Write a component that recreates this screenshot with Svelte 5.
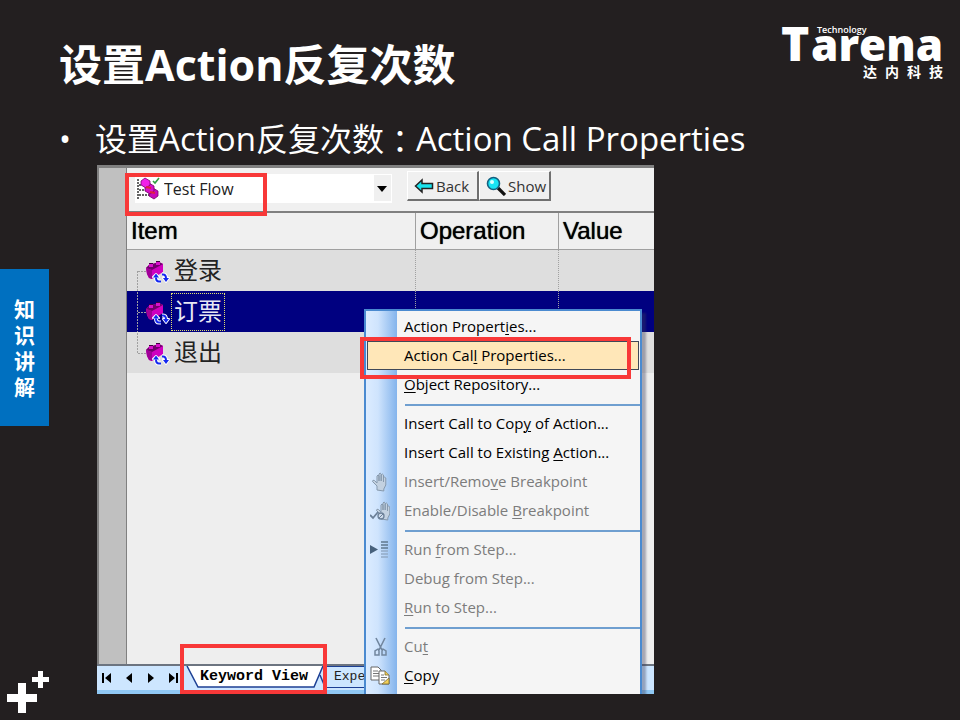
<script>
  const flows = ['Test Flow'];
  const rows = ['登录', '订票', '退出'];
  let selected = $state(1);

  // Each label is split around its underlined access key.
  const groups = [
    [
      { parts: ['Action Propert', 'i', 'es...'] },
      { parts: ['Action Cal', 'l', ' Properties...'], active: true },
      { parts: ['', 'O', 'bject Repository...'] }
    ],
    [
      { parts: ['Insert Call to Cop', 'y', ' of Action...'] },
      { parts: ['Insert Call to Existing ', 'A', 'ction...'] },
      { parts: ['Insert/Remo', 'v', 'e Breakpoint'], off: true, icon: 'hand' },
      { parts: ['Enable/Disable ', 'B', 'reakpoint'], off: true, icon: 'handcheck' }
    ],
    [
      { parts: ['Run ', 'f', 'rom Step...'], off: true, icon: 'run' },
      { parts: ['Debu', 'g', ' from Step...'], off: true },
      { parts: ['', 'R', 'un to Step...'], off: true }
    ],
    [
      { parts: ['Cu', 't', ''], off: true, icon: 'cut' },
      { parts: ['', 'C', 'opy'], icon: 'copy' }
    ]
  ];
</script>

{#snippet hand()}
  <path d="M7 18v-4L2.500 9.500q0-2 2-1L7 11V4q1-2 2 0v5-7q1-2 2.200 0v7-6q1.200-2 2.300 0v7-4q1.200-2 2.300 0v7l-2 4v2z" fill="#c3d1e0" stroke="#8699ad" stroke-width="1" />
{/snippet}

<div class="slide">
  <aside>
    <div class="chapter">
      <span>知</span><span>识</span><span>讲</span><span>解</span>
    </div>
    <svg class="plus" width="49" height="44" viewBox="0 0 49 44" aria-hidden="true">
      <path d="M18 13h8v11h11v8H26v11h-8V32H7v-8h11zM38 1h5v6h6v5h-6v6h-5v-6h-6V7h6z" fill="#fff" />
    </svg>
  </aside>

  <main>
    <header>
      <h1>设置Action反复次数</h1>
      <svg class="logo" width="170" height="62" viewBox="0 0 170 62" role="img" aria-label="Tarena Technology 达内科技">
        <text x="1" y="41" class="brand" font-size="48">T</text>
        <text x="31" y="41" class="brand" font-size="44">arena</text>
        <text x="37" y="13" class="sub">Technology</text>
        <text x="83 105 127 149" y="57" class="cn">达内科技</text>
      </svg>
    </header>

    <ul class="points">
      <li>设置<span class="latin">Action</span>反复次数<span class="colon">：</span><span class="latin">Action Call Properties</span></li>
    </ul>

    <section class="shot">
      <div class="work">
        <div class="gutter"></div>
        <div class="panel">
          <div class="toolbar">
            <div class="combo">
              <svg class="flowicon" width="24" height="24" viewBox="0 0 24 24" aria-hidden="true">
                <path d="M2 2v20M3 8h6M3 13h9M3 18h12" stroke="#333" stroke-width="1.500" stroke-dasharray="2 1" fill="none" />
                <g stroke="#7a0070" stroke-width=".8">
                  <path d="M13 14l4-3 5 3v5l-4 3-5-3z" fill="#c808b8" />
                  <path d="M9 9l4-3 5 3v5l-4 3-5-3z" fill="#d810c8" />
                  <path d="M5 4l4-3 5 3v4l-4 3-5-3z" fill="#f020e8" />
                </g>
                <path d="M10 10l5 1M14 15l5 1" stroke="#e02040" stroke-width="2" />
                <path d="M17 4l2 2 4-5" fill="none" stroke="#30a040" stroke-width="1.600" />
              </svg>
              <select aria-label="Test flow">
                {#each flows as f}<option>{f}</option>{/each}
              </select>
              <span class="arrow"></span>
            </div>
            <div class="tools">
              <button class="tool">
                <svg width="20" height="16" viewBox="0 0 20 16" aria-hidden="true">
                  <path d="M1.500 8L8 2v3.500h10.500v5H8V14z" fill="#18e4ee" stroke="#222" stroke-width="1.500" />
                </svg>Back
              </button>
              <button class="tool">
                <svg width="20" height="20" viewBox="0 0 20 20" aria-hidden="true">
                  <path d="M12 12l7 7" stroke="#111" stroke-width="3.200" />
                  <circle cx="7.500" cy="7.500" r="6" fill="#18e4f4" stroke="#146080" stroke-width="1.600" />
                  <circle cx="6" cy="6" r="2" fill="#d8ffff" />
                </svg>Show
              </button>
            </div>
          </div>

          <table>
            <colgroup><col class="c1" /><col class="c2" /><col /></colgroup>
            <thead>
              <tr><th>Item</th><th>Operation</th><th>Value</th></tr>
            </thead>
            <tbody>
              {#each rows as name, i}
                <tr class:sel={selected === i} onclick={() => (selected = i)}>
                  <td>
                    <div class="node">
                      <svg width="44" height="40" viewBox="0 0 44 40" aria-hidden="true">
                        <path d={i === 0 ? 'M10.500 20v20' : i === 2 ? 'M10.500 0v20' : 'M10.500 0v40'} class="tree" />
                        <path d="M11 20.500h8" class="tree" />
                        <path d="M19 17l3-3 10-3 4 2v8l-11 7-3-1-2-4z" fill="#d000c0" />
                        <path d="M19 17l3-3 10-3 4 2-11 6z" fill="#70006c" />
                        <path d="M19 17l6 2v9l-3-1-2-4z" fill="#a00098" />
                        <path d="M22 12h4v4h-4zM29 10h4v4h-4z" fill="#d810cc" />
                        <path d="M22 12h4v1h-4zM29 10h4v1h-4z" fill="#400040" />
                        <g fill="none" stroke="#fff" stroke-width="4" stroke-linejoin="round">
                          <path d="M34 30.500h-2q-3 0-3-4M35 23.500h1q3 0 3 4" />
                          <path d="M26 26l3-3 3 3zM36 27l3 4 3-4z" stroke-width="2" />
                        </g>
                        <path d="M34 30.500h-2q-3 0-3-4M35 23.500h1q3 0 3 4" fill="none" stroke="#1428f0" stroke-width="2" />
                        <path d="M26 26.500l3-4 3 4zM36 27l3 4 3-4z" fill="#1428f0" />
                      </svg>
                      <span>{name}</span>
                    </div>
                  </td>
                  <td></td>
                  <td></td>
                </tr>
              {/each}
            </tbody>
          </table>
        </div>
      </div>

      <div class="tabs">
        <div class="nav">
          <button aria-label="First"><svg width="12" height="12" viewBox="0 0 12 12"><path d="M1 1h2v10H1zM10 1v10L4 6z" /></svg></button>
          <button aria-label="Previous"><svg width="12" height="12" viewBox="0 0 12 12"><path d="M9 1v10L3 6z" /></svg></button>
          <button aria-label="Next"><svg width="12" height="12" viewBox="0 0 12 12"><path d="M3 1v10l6-5z" /></svg></button>
          <button aria-label="Last"><svg width="12" height="12" viewBox="0 0 12 12"><path d="M9 1h2v10H9zM2 1v10l6-5z" /></svg></button>
        </div>
        <button class="tab current">
          <svg width="140" height="22" viewBox="0 0 140 22" aria-hidden="true">
            <path d="M1 0l11 21h116l9-21" fill="#fff" stroke="#1c3f94" stroke-width="1.500" />
            <path d="M134 9l5 12" stroke="#1c3f94" stroke-width="1.500" />
          </svg>
          <span>Keyword View</span>
        </button>
        <button class="tab other"><span>Expe</span></button>
      </div>

      <div class="menu" role="menu">
        {#each groups as group, g}
          {#if g > 0}<div class="rule" role="separator"></div>{/if}
          {#each group as item}
            <button role="menuitem" class="item" class:active={item.active} disabled={item.off}>
              <span class="ico">
                {#if item.icon === 'hand'}
                  <svg width="20" height="20" viewBox="0 0 20 20">{@render hand()}</svg>
                {:else if item.icon === 'handcheck'}
                  <svg width="20" height="20" viewBox="0 0 20 20">
                    <g transform="translate(4 0)">{@render hand()}</g>
                    <path d="M0 14l3 3 5-6" fill="none" stroke="#6c8098" stroke-width="1.800" />
                    <circle cx="11" cy="15" r="3" fill="#cfdceb" stroke="#6c8098" stroke-width="1.300" />
                    <path d="M9 17l4-4" stroke="#6c8098" />
                  </svg>
                {:else if item.icon === 'run'}
                  <svg width="20" height="20" viewBox="0 0 20 20">
                    <path d="M0 5l8 4.500L0 14z" fill="#47617c" />
                    <path d="M11 2h7M11 5h7M11 8h7" stroke="#60788f" stroke-width="1.600" />
                    <path d="M11 11h7M11 14h7M11 17h7" stroke="#93abc6" stroke-width="1.600" />
                  </svg>
                {:else if item.icon === 'cut'}
                  <svg width="20" height="20" viewBox="0 0 20 20">
                    <path d="M6 1l6 12M15 1L9 13" stroke="#71869e" stroke-width="1.600" fill="none" />
                    <path d="M8 12l-3 2v4h4v-4zM13 12l3 2v4h-4v-4z" fill="none" stroke="#71869e" stroke-width="1.500" />
                  </svg>
                {:else if item.icon === 'copy'}
                  <svg width="20" height="20" viewBox="0 0 20 20">
                    <path d="M1 1h7l3 3v10H1z" fill="#fff" stroke="#666" />
                    <path d="M3 5h5M3 7.500h6M3 10h6" stroke="#777" />
                    <path d="M9 5h6l4 4v9H9z" fill="#fff" stroke="#666" />
                    <path d="M11 9h3M11 11.500h6M11 14h4" stroke="#777" />
                    <path d="M15 5v4h4M19 12v6h-7z" fill="#f2cf58" stroke="#7a6a30" stroke-width=".8" />
                  </svg>
                {/if}
              </span>
              <span class="label">{item.parts[0]}<u>{item.parts[1]}</u>{item.parts[2]}</span>
            </button>
          {/each}
        {/each}
      </div>

      <div class="mark m1"></div>
      <div class="mark m2"></div>
      <div class="mark m3"></div>
    </section>
  </main>
</div>

<style>
  :global(body) {
    margin: 0;
    background: #231f20;
  }
  .slide {
    display: grid;
    grid-template-columns: 49px 1fr;
    min-height: 100vh;
    background: #231f20;
    color: #fff;
    font-family: 'Open Sans', 'Noto Sans CJK SC', sans-serif;
  }
  button {
    font: inherit;
    color: inherit;
    border: 0;
    padding: 0;
    background: none;
    text-align: left;
  }
  svg {
    display: block;
    flex: none;
  }
  aside {
    display: flex;
    flex-direction: column;
    justify-content: space-between;
    padding: 269px 0 6px;
    box-sizing: border-box;
  }
  .chapter {
    display: flex;
    flex-direction: column;
    align-items: center;
    padding: 27px 0 26px;
    background: #0070c0;
    font-size: 21px;
    line-height: 26px;
    font-weight: 700;
  }
  header {
    display: flex;
    justify-content: space-between;
    padding: 20px 10px 0;
    height: 90px;
    box-sizing: border-box;
  }
  h1 {
    margin: 16px 0 0;
    font-size: 43px;
    line-height: 58px;
    font-weight: 700;
    white-space: nowrap;
  }
  .logo {
    overflow: visible;
  }
  .brand {
    font-family: 'Open Sans', sans-serif;
    font-weight: 800;
    fill: #fff;
  }
  .sub {
    font-family: 'Open Sans', sans-serif;
    font-size: 9px;
    font-weight: 600;
    fill: #fff;
  }
  .cn {
    font-family: 'Noto Sans CJK SC', sans-serif;
    font-size: 14px;
    font-weight: 700;
    fill: #fff;
  }
  .points {
    list-style: none;
    margin: 0;
    padding: 28px 0 0 10px;
    height: 75px;
    box-sizing: border-box;
  }
  .points li {
    display: flex;
    font-size: 32px;
    line-height: 42px;
    white-space: pre;
  }
  .points li::before {
    content: '•';
    width: 36px;
  }
  .latin {
    font-size: 33px;
  }
  .colon {
    font-family: 'Noto Sans CJK TC', sans-serif;
  }

  .shot {
    position: relative;
    display: flex;
    flex-direction: column;
    width: 100%;
    max-width: 557px;
    margin-left: 48px;
    overflow: hidden;
    background: #f0f0f0;
    color: #000;
  }
  .work {
    display: flex;
    min-height: 501px;
    box-sizing: border-box;
    border-top: 3px solid #808080;
    border-bottom: 2px solid #6c7480;
  }
  .gutter {
    width: 30px;
    box-sizing: border-box;
    background: #c0c0c0;
    border-left: 2px solid #808080;
    border-right: 1px solid #808080;
  }
  .panel {
    flex: 1;
    background: #eeeeee;
  }
  .toolbar {
    display: flex;
    align-items: flex-start;
    gap: 15px;
    height: 45px;
    box-sizing: border-box;
    padding: 3px 0 0 8px;
    border-bottom: 2px solid #808080;
    background: #f0f0f0;
  }
  .combo {
    position: relative;
    display: flex;
    align-items: center;
    width: 257px;
    height: 29px;
    margin-top: 3px;
    background: #fff;
  }
  .flowicon {
    position: absolute;
    left: 1px;
    top: 3px;
  }
  .combo select {
    appearance: none;
    width: 100%;
    height: 29px;
    border: 0;
    padding: 1px 0 0 29px;
    background: transparent;
    color: #222;
    font: 16px 'Open Sans', sans-serif;
  }
  .arrow {
    position: absolute;
    right: 1px;
    top: 1px;
    width: 17px;
    height: 26px;
    background: #f0f0f0;
    pointer-events: none;
  }
  .arrow::after {
    content: '';
    position: absolute;
    left: 3px;
    top: 11px;
    border: 5px solid transparent;
    border-top: 6px solid #000;
    border-bottom: 0;
  }
  .tools {
    display: flex;
  }
  .tool {
    display: flex;
    align-items: center;
    gap: 2px;
    height: 30px;
    width: 72px;
    box-sizing: border-box;
    padding-left: 6px;
    border: solid;
    border-width: 1px 2px 2px 1px;
    border-color: #fff #707070 #707070 #fff;
    background: #f0f0f0;
    color: #333;
    font-size: 15px;
  }

  table {
    width: 100%;
    table-layout: fixed;
    border-collapse: separate;
    border-spacing: 0;
  }
  .c1 {
    width: 289px;
  }
  .c2 {
    width: 143px;
  }
  th {
    height: 37px;
    box-sizing: border-box;
    padding: 0 0 0 4px;
    border-bottom: 1px solid #a0a0a0;
    border-right: 1px solid #a0a0a0;
    background: #f0f0f0;
    text-align: left;
    font: 24px/34px 'Liberation Sans', sans-serif;
    text-shadow: 0 0 1px #000;
  }
  td {
    height: 41px;
    padding: 0;
    box-sizing: border-box;
    background: #dedede;
    border-right: 1px dotted #a0a0a0;
  }
  th:last-child,
  td:last-child {
    border-right: 0;
  }
  .sel td {
    background: #000080;
    color: #fff;
  }
  .node {
    display: flex;
    align-items: center;
    height: 41px;
  }
  .node span {
    box-sizing: border-box;
    height: 38px;
    padding: 0 2px;
    border: 1px solid transparent;
    color: #222;
    font: 24px/32px 'Noto Sans CJK SC', sans-serif;
  }
  .sel .node span {
    border: 1px dotted #e0e070;
    color: #e8e8f4;
  }
  .tree {
    fill: none;
    stroke: #a0a0a0;
    stroke-dasharray: 2 1;
  }

  .tabs {
    display: flex;
    height: 28px;
    box-sizing: border-box;
    background: #cde6ff;
    border-bottom: 4px solid #90c8f4;
    font: 15px/18px 'Liberation Mono', monospace;
  }
  .nav {
    display: flex;
    align-items: center;
    gap: 10px;
    padding: 0 7px 0 4px;
  }
  .tab {
    position: relative;
    height: 22px;
    white-space: nowrap;
  }
  .tab span {
    position: relative;
  }
  .current {
    width: 140px;
    padding-left: 14px;
    box-sizing: border-box;
    font-weight: 700;
  }
  .current svg {
    position: absolute;
    left: 0;
    top: 0;
  }
  .other {
    width: 40px;
    padding-left: 8px;
    border-bottom: 1px solid #1c3f94;
    border-top: 1px solid #1c3f94;
    box-sizing: border-box;
    font-size: 13px;
    line-height: 16px;
    color: #222;
  }

  .menu {
    position: absolute;
    left: 267px;
    top: 144px;
    width: 278px;
    height: 400px;
    box-sizing: border-box;
    padding: 1px;
    border: 2px solid #4a8ad0;
    background: linear-gradient(90deg, #dcecff 0, #cfe4fd 12px, #84b4ec 31px, #f5f5f5 31px);
    box-shadow: 4px 4px 2px rgba(60, 60, 90, 0.4);
  }
  .item {
    display: flex;
    align-items: center;
    width: 100%;
    height: 29px;
    box-sizing: border-box;
    border: 1px solid transparent;
    font-size: 15px;
    line-height: 20px;
    white-space: nowrap;
  }
  .item:disabled {
    color: #7c7c7c;
  }
  .active {
    border: 1px solid #404858;
    background: #ffe7b8;
  }
  .ico {
    width: 34px;
    padding-left: 2px;
  }
  .label {
    padding-bottom: 2px;
  }
  u {
    text-underline-offset: 2px;
    text-decoration-thickness: 1px;
  }
  .rule {
    height: 2px;
    margin: 5px -1px 3px 38px;
    background: #6f9fd0;
  }
  .mark {
    position: absolute;
    box-sizing: border-box;
    border: 4px solid #f83838;
    pointer-events: none;
  }
  .m1 {
    left: 28px;
    top: 8px;
    width: 142px;
    height: 43px;
  }
  .m2 {
    left: 263px;
    top: 172px;
    width: 271px;
    height: 42px;
  }
  .m3 {
    left: 83px;
    top: 479px;
    width: 147px;
    height: 50px;
  }
</style>
